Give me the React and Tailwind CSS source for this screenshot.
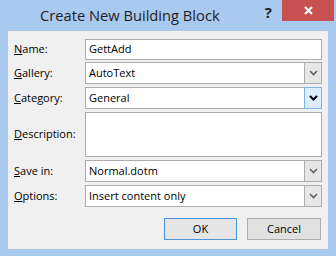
import React from 'react';

const Chevron = ({ dark }) => (
  <svg width="9" height="6" viewBox="0 0 9 6">
    <path d="M1 1 L4.5 4.5 L8 1" fill="none" stroke={dark ? '#000000' : '#606060'} strokeWidth={dark ? 2 : 1.6} />
  </svg>
);

const Combo = ({ value, active }) => (
  <div className="flex h-full w-full">
    <div className="flex-1 flex items-center bg-white border-y border-l border-[#acacac] pl-[3px]">
      {value}
    </div>
    <div
      className={
        active
          ? 'w-[18px] flex items-center justify-center bg-[#dcecfc] border border-[#7eb4ea]'
          : 'w-[18px] flex items-center justify-center bg-[#e6e6e6] border border-[#acacac]'
      }
    >
      <Chevron dark={active} />
    </div>
  </div>
);

const Row = ({ k, rest, h, mt, children }) => (
  <div className={`flex items-center ${h} ${mt}`}>
    <div className="w-[71px] shrink-0">
      <u>{k}</u>
      {rest}
    </div>
    <div className="flex-1 h-full">{children}</div>
  </div>
);

export default function App() {
  return (
    <div
      className="w-[336px] h-[256px] bg-[#aac9ee] flex flex-col text-[11px] text-black"
      style={{ fontFamily: '"Segoe UI", "Open Sans", sans-serif' }}
    >
      {/* Title bar */}
      <div className="h-[31px] flex items-start shrink-0">
        <div className="pl-[40px] pt-[6px] text-[14.7px] text-[#1e1e1e] leading-[18px]">
          Create New Building Block
        </div>
        <div className="flex-1" />
        <div className="pt-[3px] text-[15px] font-bold text-[#222] leading-[18px]">?</div>
        <div className="ml-[10px] mr-[2px] w-[52px] h-[21px] bg-[#c75050] flex items-center justify-center">
          <svg width="9" height="9" viewBox="0 0 9 9">
            <path d="M1 1 L8 8 M8 1 L1 8" stroke="#ffffff" strokeWidth="2.2" />
          </svg>
        </div>
      </div>

      {/* Client area */}
      <div className="mx-[8px] mb-[7px] flex-1 bg-[#f0f0f0] flex flex-col pl-[6px] pr-[6px] pt-[8px]">
        <Row k="N" rest="ame:" h="h-[21px]" mt="">
          <div className="h-full bg-white border border-[#acacac] flex items-center pl-[3px]">GettAdd</div>
        </Row>
        <Row k="G" rest="allery:" h="h-[22px]" mt="mt-[2px]">
          <Combo value="AutoText" />
        </Row>
        <Row k="C" rest="ategory:" h="h-[22px]" mt="mt-[3px]">
          <Combo value="General" active />
        </Row>
        <Row k="D" rest="escription:" h="h-[45px]" mt="mt-[3px]">
          <div className="h-full bg-white border border-[#acacac]" />
        </Row>
        <Row k="S" rest="ave in:" h="h-[22px]" mt="mt-[3px]">
          <Combo value="Normal.dotm" />
        </Row>
        <Row k="O" rest="ptions:" h="h-[22px]" mt="mt-[3px]">
          <Combo value="Insert content only" />
        </Row>
        <div className="flex justify-end gap-[10px] mt-[11px] pr-[1px]">
          <div className="w-[73px] h-[22px] bg-[#e5e5e5] border border-[#4a94d8] flex items-center justify-center">
            OK
          </div>
          <div className="w-[74px] h-[22px] bg-[#e1e1e1] border border-[#adadad] flex items-center justify-center">
            Cancel
          </div>
        </div>
      </div>
    </div>
  );
}
